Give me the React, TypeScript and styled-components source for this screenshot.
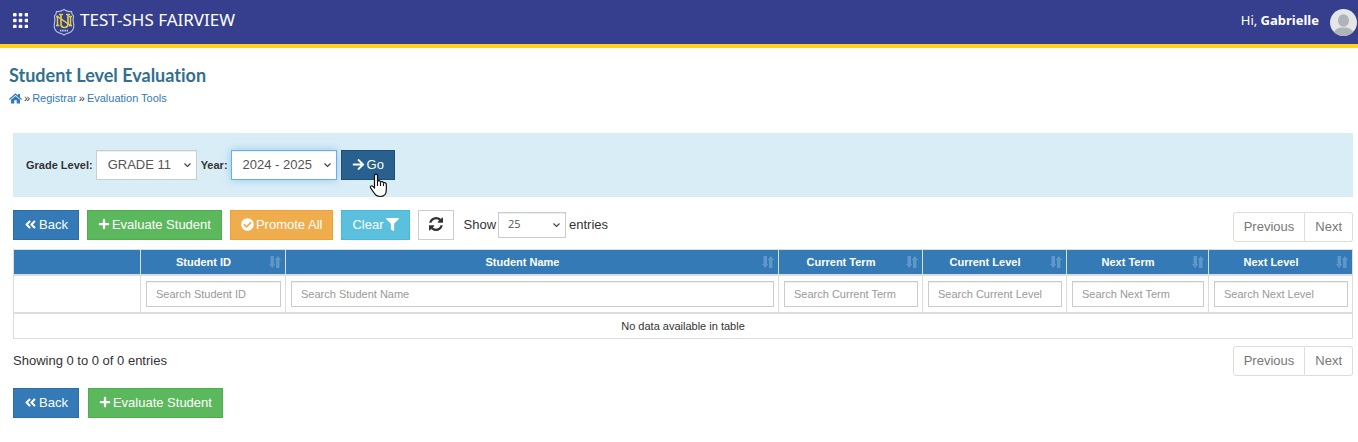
import React from 'react';
import styled, { createGlobalStyle, css } from 'styled-components';
import { FaAngleDoubleLeft, FaArrowRight, FaCheckCircle, FaFilter, FaPlus } from 'react-icons/fa';

const GlobalStyle = createGlobalStyle`
  *, *::before, *::after { box-sizing: border-box; }
  body {
    margin: 0;
    background: #fff;
    color: #333;
    font: 13px/18px "Liberation Sans", Arial, sans-serif;
  }
  button, input, select { font-family: inherit; }
`;

const Header = styled.header`
  display: flex;
  align-items: center;
  height: 48px;
  padding: 0 1px 4px 13px;
  background: #353f8e;
  background-clip: padding-box;
  border-bottom: 4px solid #ffd21c;
  color: #fff;
  font-family: "Noto Sans", "Open Sans", sans-serif;
`;

const MenuButton = styled.button`
  display: flex;
  padding: 0;
  margin-right: 25px;
  border: 0;
  background: none;
  color: inherit;
  cursor: pointer;
`;

const Brand = styled.a`
  display: flex;
  align-items: center;
  gap: 5px;
  flex: 1;
  color: inherit;
  font-size: 17px;
  line-height: 24px;
  text-decoration: none;
`;

const Crest = styled.svg`
  width: 22px;
  height: 28px;
  margin-top: 4px;
`;

const User = styled.div`
  display: flex;
  align-items: center;
  gap: 11px;
  font-size: 13px;
`;

const Avatar = styled.svg`
  width: 27px;
  height: 27px;
  margin-top: 4px;
`;

const Heading = styled.div`
  padding: 15px 9px 0;
`;

const Title = styled.h1`
  margin: 0;
  color: #31708f;
  font: bold 18px/24px Lato, "Noto Sans", sans-serif;
  font-variant-ligatures: none;
`;

const Crumbs = styled.nav`
  display: flex;
  align-items: center;
  gap: 2px;
  margin-top: 3px;
  font-size: 11px;
  line-height: 16px;

  a { display: flex; color: #337ab7; text-decoration: none; }
`;

const Main = styled.main`
  padding: 27px 5px 24px 13px;
`;

const FilterBar = styled.form`
  display: flex;
  align-items: center;
  height: 64px;
  padding: 0 13px;
  background: #d9edf7;
`;

const FieldLabel = styled.label`
  margin-right: 3px;
  font-size: 11px;
  font-weight: bold;
`;

const SelectWrap = styled.span<{ $width: number; $gap?: number }>`
  display: grid;
  align-items: center;
  width: ${p => p.$width}px;
  margin-right: ${p => p.$gap ?? 0}px;

  > * { grid-area: 1 / 1; }
  svg { justify-self: end; margin-right: 5px; pointer-events: none; }
`;

const Select = styled.select<{ $active?: boolean; $small?: boolean }>`
  appearance: none;
  width: 100%;
  height: 30px;
  padding: 0 11px 2px;
  border: 1px solid #ccc;
  border-radius: 0;
  background: #fff;
  box-shadow: inset 0 1px 1px rgba(0, 0, 0, 0.075);
  color: #555;
  font-size: 13px;
  outline: none;
  ${p => p.$active && css`
    border-color: #66afe9;
    box-shadow: inset 0 1px 1px rgba(0, 0, 0, 0.075), 0 0 8px rgba(102, 175, 233, 0.6);
  `}
  ${p => p.$small && css`
    height: 26px;
    padding: 0 9px 2px;
    font: 11px "Open Sans", sans-serif;
  `}
`;

const tones = {
  primary: ['#337ab7', '#2e6da4', '#fff'],
  pressed: ['#286090', '#204d74', '#fff'],
  success: ['#5cb85c', '#4cae4c', '#fff'],
  warning: ['#f0ad4e', '#eea236', '#fff'],
  info: ['#5bc0de', '#46b8da', '#fff'],
  plain: ['#fff', '#ccc', '#333'],
};

const Button = styled.button<{ $tone: keyof typeof tones }>`
  position: relative;
  display: inline-flex;
  align-items: center;
  gap: 2px;
  height: 30px;
  padding: 0 10px 2px;
  border: 1px solid ${p => tones[p.$tone][1]};
  background: ${p => tones[p.$tone][0]};
  color: ${p => tones[p.$tone][2]};
  font-size: 13px;
  white-space: nowrap;
  cursor: pointer;
`;

const Pointer = styled.svg`
  position: absolute;
  left: 26px;
  top: 22px;
  width: 20px;
  height: 25px;
`;

const Toolbar = styled.div`
  display: flex;
  align-items: flex-start;
  gap: 8px;
  margin-top: 13px;
`;

const Length = styled.label`
  display: flex;
  align-items: center;
  gap: 2px;
  flex: 1;
  height: 29px;
  padding-left: 2px;
`;

const Pager = styled.nav`
  display: flex;
  margin-top: 2px;

  button {
    height: 30px;
    padding: 0 10px 1px;
    border: 1px solid #ddd;
    background: #fff;
    color: #777;
    font-size: 13px;
  }
  button:first-child { border-radius: 3px 0 0 3px; }
  button:last-child { border-radius: 0 3px 3px 0; border-left: 0; }
`;

const Table = styled.table`
  width: 100%;
  margin-top: 7px;
  border: 1px solid #ddd;
  border-collapse: separate;
  border-spacing: 0;
  table-layout: fixed;
  font-size: 11px;
  line-height: 16px;

  th, td { padding: 4px; border-right: 1px solid #ddd; text-align: center; }
  th:last-child, td:last-child { border-right: 0; }
  thead th, thead td { border-bottom: 2px solid #ddd; }
  thead th { background: #337ab7; color: #fff; }
`;

const HeadLabel = styled.span`
  display: flex;
  align-items: center;

  span { flex: 1; padding-left: 8px; padding-right: 15px; }
`;

const FilterCell = styled.td`
  && { padding: 5px 4px 5px 5px; }
`;

const Search = styled.input`
  display: block;
  width: 100%;
  height: 26px;
  padding: 0 9px;
  border: 1px solid #ccc;
  border-radius: 0;
  box-shadow: inset 0 1px 1px rgba(0, 0, 0, 0.075);
  font-size: 11px;

  &::placeholder { color: #999; opacity: 1; }
`;

const Summary = styled.div`
  display: flex;
  justify-content: space-between;
  margin-top: 5px;

  p { margin: 4px 0 0; line-height: 18px; padding-top: 4px; }
`;

const Actions = styled.div`
  display: flex;
  gap: 9px;
  margin-top: 12px;
`;

const Chevron = () => (
  <svg width="9" height="8" viewBox="0 0 9 8" fill="none" stroke="#444" strokeWidth="1.2" aria-hidden="true">
    <path d="M1.5 2.5 4.5 5.5 7.5 2.5" />
  </svg>
);

const HomeIcon = () => (
  <svg width="13" height="11" viewBox="0 0 13 11" fill="currentColor" aria-hidden="true">
    <path d="M6.500 0.300 9 2.500V1H11V4.200L13 6 12.200 6.900 6.500 1.900 0.800 6.900 0 6Z" />
    <path d="M6.500 2.900 11 6.800V10.500H7.700V7.300H5.300V10.500H2V6.800Z" />
  </svg>
);

const SortIcon = () => (
  <svg width="12" height="12" viewBox="0 0 12 12" fill="#fff" opacity="0.22" aria-hidden="true">
    <path d="M1.500 0H5V8H6.200L3.200 12 0 8H1.500Z M7 12H10.500V4H12L8.800 0 5.800 4H7Z" />
  </svg>
);

const RefreshIcon = () => (
  <svg width="14" height="14" viewBox="0 0 1536 1536" fill="currentColor" aria-hidden="true">
    <path d="M1511 928q0 5-1 7-64 268-268 434.500T764 1536q-146 0-282.500-55T238 1324l-129 129q-19 19-45 19t-45-19-19-45V960q0-26 19-45t45-19h448q26 0 45 19t19 45-19 45l-137 137q71 66 161 102t187 36q134 0 250-65t186-179q11-17 53-117 8-23 30-23h192q13 0 22.500 9.500t9.500 22.500zm25-800v448q0 26-19 45t-45 19h-448q-26 0-45-19t-19-45 19-45l138-138Q969 256 768 256q-134 0-250 65T332 500q-11 17-53 117-8 23-30 23H50q-13 0-22.500-9.500T18 608v-7q65-268 270-434.500T768 0q146 0 284 55.500T1297 212l130-129q19-19 45-19t45 19 19 45z" />
  </svg>
);

const columns = [
  { name: 'Student ID', width: 145 },
  { name: 'Student Name', width: undefined },
  { name: 'Current Term', width: 144 },
  { name: 'Current Level', width: 144 },
  { name: 'Next Term', width: 142 },
  { name: 'Next Level', width: 143 },
];

const Pagination = () => (
  <Pager aria-label="Table pages">
    <button type="button">Previous</button>
    <button type="button">Next</button>
  </Pager>
);

const BackAndEvaluate = () => (
  <>
    <Button type="button" $tone="primary"><FaAngleDoubleLeft size={13} />Back</Button>
    <Button type="button" $tone="success"><FaPlus size={12} />Evaluate Student</Button>
  </>
);

export default function App() {
  return (
    <>
      <GlobalStyle />
      <Header>
        <MenuButton type="button" aria-label="Menu">
          <svg width="15" height="15" viewBox="0 0 15 15" fill="#fff">
            {[0, 6, 12].map(y => [0, 6, 12].map(x => (
              <rect key={`${x}-${y}`} x={x - (x ? 0.3 : 0)} y={y - (y ? 0.3 : 0)} width="3.6" height="3.6" rx="1" />
            )))}
          </svg>
        </MenuButton>
        <Brand href="#">
          <Crest viewBox="0 0 22 28" fill="none" aria-hidden="true">
            <path d="M3.500 3.500Q7.500 4 11 1.500 14.500 4 18.500 3.500 18.500 6 20.500 8 19.500 12 20.800 17 21 23 16 24.800 13 25.500 11 27 9 25.500 6 24.800 1 23 1.200 17 2.500 12 1.500 8 3.500 6 3.500 3.500Z" stroke="#b4bce2" strokeWidth="1.200" />
            <path d="M8 6.500V15.500Q8 19.500 11.500 19.500T15 15.500V6.500M6 6.500H10M13 6.500H17" stroke="#e0cc48" strokeWidth="1.700" />
            <path d="M4.500 17.500V8.500L17.500 17.500V8.500M3 17.500H6.500M3 8.500H5.500M16 8.500H19M16 17.500H19" stroke="#e0cc48" strokeWidth="1.500" />
            <path d="M7 22.700H15" stroke="#c3c9e6" strokeWidth="1.800" strokeDasharray="1.500 0.700" />
          </Crest>
          TEST-SHS FAIRVIEW
        </Brand>
        <User>
          <span>Hi, <b>Gabrielle</b></span>
          <Avatar viewBox="0 0 27 27" aria-hidden="true">
            <circle cx="13.500" cy="13.500" r="13.500" fill="#e4e6e7" />
            <ellipse cx="13.500" cy="11.500" rx="5.500" ry="6.200" fill="#aeb4b7" />
            <path d="M4 23Q6 19 11 18.500H16Q21 19 23 23 19 27 13.500 27T4 23Z" fill="#aeb4b7" />
          </Avatar>
        </User>
      </Header>

      <Heading>
        <Title>Student Level Evaluation</Title>
        <Crumbs aria-label="Breadcrumb">
          <a href="#" aria-label="Home"><HomeIcon /></a>
          <span>»</span>
          <a href="#">Registrar</a>
          <span>»</span>
          <a href="#">Evaluation Tools</a>
        </Crumbs>
      </Heading>

      <Main>
        <FilterBar onSubmit={e => e.preventDefault()}>
          <FieldLabel htmlFor="grade">Grade Level:</FieldLabel>
          <SelectWrap $width={101} $gap={4}>
            <Select id="grade"><option>GRADE 11</option></Select>
            <Chevron />
          </SelectWrap>
          <FieldLabel htmlFor="year">Year:</FieldLabel>
          <SelectWrap $width={106} $gap={4}>
            <Select id="year" $active><option>2024 - 2025</option></Select>
            <Chevron />
          </SelectWrap>
          <Button type="submit" $tone="pressed">
            <FaArrowRight size={13} />Go
            <Pointer viewBox="0 0 20 25" aria-hidden="true">
              <path d="M6.500 15V3Q6.500 1.200 8 1.200T9.500 3V8.500Q10 7.500 11.200 7.700T12.500 9.200Q13.200 8.300 14.300 8.600T15.500 10.200Q16.300 9.400 17.300 9.800T18.300 11.500V17Q18.300 23.500 12 23.500 8.500 23.500 6.500 20.500L2.700 15.200Q1.800 13.600 3 12.900T6.500 15Z" fill="#fff" stroke="#111" strokeWidth="1.200" strokeLinejoin="round" />
              <path d="M9.500 8.500V13M12.500 9.500V13M15.500 10.500V13" stroke="#111" strokeWidth="1.100" />
            </Pointer>
          </Button>
        </FilterBar>

        <Toolbar>
          <BackAndEvaluate />
          <Button type="button" $tone="warning"><FaCheckCircle size={13} />Promote All</Button>
          <Button type="button" $tone="info">Clear<FaFilter size={13} /></Button>
          <Button type="button" $tone="plain" aria-label="Refresh"><RefreshIcon /></Button>
          <Length>
            Show
            <SelectWrap $width={68} $gap={1}>
              <Select $small><option>25</option></Select>
              <Chevron />
            </SelectWrap>
            entries
          </Length>
          <Pagination />
        </Toolbar>

        <Table>
          <colgroup>
            <col width={127} />
            {columns.map(c => <col key={c.name} width={c.width} />)}
          </colgroup>
          <thead>
            <tr>
              <th />
              {columns.map(c => (
                <th key={c.name} scope="col"><HeadLabel><span>{c.name}</span><SortIcon /></HeadLabel></th>
              ))}
            </tr>
            <tr>
              <td />
              {columns.map(c => (
                <FilterCell key={c.name}>
                  <Search type="text" aria-label={`Search ${c.name}`} placeholder={`Search ${c.name}`} />
                </FilterCell>
              ))}
            </tr>
          </thead>
          <tbody>
            <tr><td colSpan={7}>No data available in table</td></tr>
          </tbody>
        </Table>

        <Summary>
          <p>Showing 0 to 0 of 0 entries</p>
          <Pagination />
        </Summary>
        <Actions><BackAndEvaluate /></Actions>
      </Main>
    </>
  );
}
